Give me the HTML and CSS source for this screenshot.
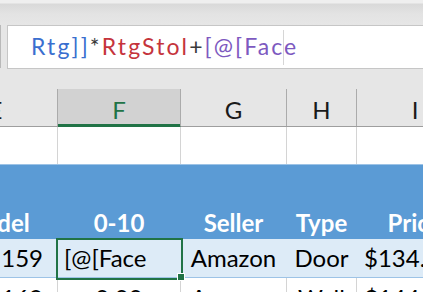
FILE: index.html
```html
<!DOCTYPE html>
<html>
<head>
<meta charset="utf-8">
<link rel="stylesheet" href="styles.css">
</head>
<body>
<div class="ribbon-edge"></div>
<div class="formula-row">
  <div class="fx-sep"></div>
  <div class="formula-box">
    <span class="f-blue">Rtg]]</span><span class="f-op">*</span><span class="f-red">RtgStol</span><span class="f-op">+</span><span class="f-purple">[@[Face</span>
    <div class="caret"></div>
  </div>
</div>
<div class="gap"></div>
<div class="sheet">
  <div class="row head">
    <div class="c">E</div>
    <div class="c sel">F</div>
    <div class="c">G</div>
    <div class="c">H</div>
    <div class="c last">I</div>
  </div>
  <div class="row plain">
    <div class="c"></div>
    <div class="c"></div>
    <div class="c"></div>
    <div class="c"></div>
    <div class="c last"></div>
  </div>
  <div class="row thead">
    <div class="c">Model</div>
    <div class="c">0-10</div>
    <div class="c">Seller</div>
    <div class="c">Type</div>
    <div class="c last">Price</div>
  </div>
  <div class="row band">
    <div class="c num">159</div>
    <div class="c edit">[@[Face</div>
    <div class="c mid">Amazon</div>
    <div class="c mid">Door</div>
    <div class="c left last">$134.99</div>
  </div>
  <div class="row plain data">
    <div class="c num">169</div>
    <div class="c mid">0.00</div>
    <div class="c mid">Amazon</div>
    <div class="c mid">Wall</div>
    <div class="c left last">$144.99</div>
  </div>
  <div class="selection"></div>
  <div class="handle"></div>
</div>
</body>
</html>
```

FILE: styles.css
```css
html, body {
  margin: 0;
  padding: 0;
}
body {
  width: 423px;
  height: 292px;
  overflow: hidden;
  background: #e6e6e6;
  font-family: Lato, "Open Sans", sans-serif;
  position: relative;
}
.ribbon-edge {
  height: 25px;
  background: linear-gradient(#efefef 0, #efefef 3px, #d9d9d9 4px, #e3e3e3 14px, #e6e6e6 25px);
}
.formula-row {
  display: flex;
  height: 44px;
}
.fx-sep {
  width: 1px;
  background: #b9b9b9;
  height: 43px;
}
.formula-box {
  position: relative;
  flex: 1;
  margin-left: 6px;
  height: 42px;
  background: #fff;
  border: 1px solid #c6c6c6;
  border-right: none;
  padding-left: 23px;
  font-size: 23px;
  letter-spacing: 2.1px;
  line-height: 40px;
  white-space: nowrap;
}
.f-blue { color: #3a6fcf; }
.f-red { color: #c5343c; }
.f-op { color: #3a3a3a; }
.f-purple { color: #7d59c0; }
.caret {
  position: absolute;
  left: 275px;
  top: 4px;
  width: 1px;
  height: 35px;
  background: #d6d6d6;
}
.gap {
  height: 20px;
}
.sheet {
  position: relative;
  margin-left: -66px;
}
.row {
  display: grid;
  grid-template-columns: 124px 123px 106px 70px 116px;
  white-space: nowrap;
}
.c {
  overflow: hidden;
  border-right: 1px solid transparent;
}
.head {
  height: 37px;
  border-bottom: 1px solid #9e9e9e;
}
.head .c {
  border-right-color: #ababab;
  text-align: center;
  font-size: 24px;
  padding-top: 4px;
  line-height: 33px;
  color: #1a1a1a;
}
.head .c.sel {
  background: #d2d2d2;
  color: #217346;
  box-shadow: inset 0 -2px 0 #217346;
  border-bottom: 1px solid #217346;
  margin-bottom: -1px;
}
.head .c.last, .plain .c.last {
  border-right: none;
}
.plain {
  height: 37px;
  background: #fff;
}
.plain .c {
  border-right-color: #d4d4d4;
}
.row.plain:not(.data) {
  border-bottom: 1px solid #9dc3e6;
}
.thead {
  height: 74px;
  background: #5b9bd5;
  color: #fff;
  font-weight: bold;
  font-size: 24px;
}
.thead .c {
  text-align: center;
  padding-top: 43px;
  line-height: 30px;
}
.band {
  height: 38px;
  background: #ddebf7;
  border-bottom: 1px solid #9dc3e6;
}
.band .c, .data .c {
  font-size: 24px;
  line-height: 30px;
  padding-top: 4px;
  color: #000;
}
.data .c {
  padding-top: 5px;
}
.num {
  text-align: right;
  padding-right: 14px;
}
.edit {
  padding-left: 6px;
}
.mid {
  text-align: center;
}
.left {
  padding-left: 7px;
}
.selection {
  position: absolute;
  left: 122px;
  top: 149px;
  width: 123px;
  height: 38px;
  border: 2px solid #217346;
}
.handle {
  position: absolute;
  left: 243px;
  top: 184px;
  width: 6px;
  height: 6px;
  background: #217346;
  border: 1px solid #fff;
}
```
